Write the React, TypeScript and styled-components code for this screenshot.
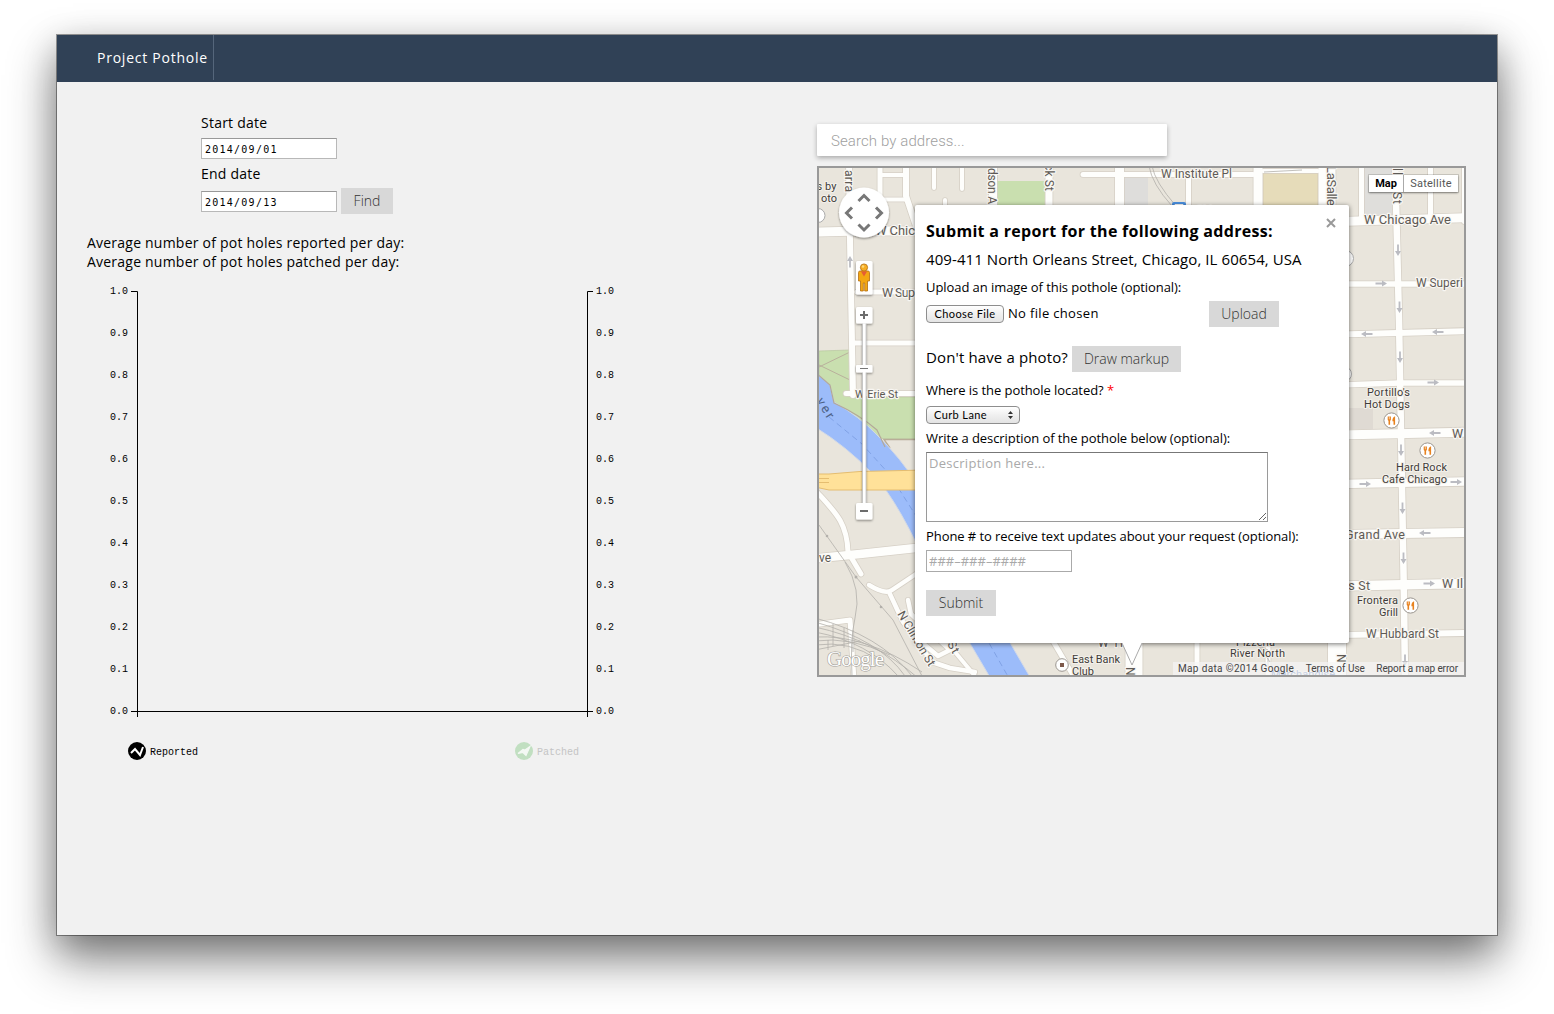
import React from 'react';
import styled, { createGlobalStyle } from 'styled-components';

const GlobalStyle = createGlobalStyle`
  * { box-sizing: border-box; }
  html, body { margin: 0; background: #fff; }
  body {
    width: 1554px;
    height: 1014px;
    overflow: hidden;
    font-family: 'Open Sans', 'Noto Sans', sans-serif;
    color: #000;
  }
`;

const Desktop = styled.div`
  width: 1554px;
  height: 1014px;
  padding: 35px 57px 79px;
`;

const Window = styled.div`
  height: 900px;
  display: flex;
  flex-direction: column;
  background: #f1f1f1;
  box-shadow: 0 0 0 1px rgba(0, 0, 0, 0.38), 0 24px 46px rgba(0, 0, 0, 0.46),
    0 10px 32px rgba(0, 0, 0, 0.22);
`;

const NavBar = styled.header`
  flex: none;
  height: 47px;
  padding-left: 40px;
  background: #304156;
`;

const Brand = styled.div`
  display: inline-block;
  height: 45px;
  padding-right: 5px;
  border-right: 1px solid #55667b;
  color: #fff;
  font-size: 14px;
  line-height: 46px;
  letter-spacing: 0.76px;
`;

const Columns = styled.main`
  display: grid;
  grid-template-columns: 730px 650px;
  padding-left: 30px;
`;

const StatsColumn = styled.section`
  padding-top: 31px;
`;

const DateForm = styled.form`
  margin-left: 114px;
`;

const DateLabel = styled.label<{ $gap: number }>`
  display: block;
  margin-bottom: ${(p) => p.$gap}px;
  font-size: 14px;
  line-height: 19px;
  letter-spacing: 0.23px;
`;

const DateRow = styled.div`
  display: flex;
  align-items: flex-end;
  gap: 4px;
  margin-bottom: 5px;
  &:last-child { height: 24px; margin: 0 0 2px; }
`;

const DateInput = styled.input`
  width: 136px;
  height: 21px;
  padding: 2px 3px 0;
  border: 1px solid #b8b8b8;
  border-top-color: #999;
  border-radius: 0;
  background: #fff;
  font: 10px 'DejaVu Sans Mono', 'Liberation Mono', monospace;
  letter-spacing: 1.25px;
  outline: none;
`;

const FlatButton = styled.button<{ $w: number }>`
  flex: none;
  width: ${(p) => p.$w}px;
  height: 26px;
  padding: 0;
  border: 0;
  background: #d8d8d8;
  color: #333;
  font-family: 'Open Sans', sans-serif;
  font-size: 14px;
  font-weight: 300;
  line-height: 26px;
`;

const FindButton = styled(FlatButton)`
  margin-bottom: -2px;
`;

const Averages = styled.div`
  margin-top: 21px;
  font-size: 14px;
  line-height: 19px;
  letter-spacing: 0.22px;
`;

const Chart = styled.svg`
  display: block;
  margin: 10px 0 0 13px;
  font: 10px 'Liberation Mono', monospace;
  letter-spacing: 0;
`;

const MapColumn = styled.section`
  padding-top: 42px;
`;

const SearchBox = styled.input`
  display: block;
  width: 350px;
  height: 32px;
  padding: 1px 14px 0;
  border: 0;
  border-radius: 1px;
  background: #fff;
  box-shadow: 0 2px 5px rgba(0, 0, 0, 0.3);
  font: 300 15px Roboto, sans-serif;
  letter-spacing: 0.1px;
  outline: none;
  &::placeholder { color: #a0a0a0; }
`;

const MapFrame = styled.div`
  position: relative;
  width: 649px;
  height: 511px;
  margin-top: 10px;
  border: 2px solid #999;
  overflow: hidden;
`;

const MapCanvas = styled.svg`
  display: block;
  font-family: Roboto, sans-serif;
`;

const MapTypes = styled.div`
  position: absolute;
  top: 7px;
  right: 6px;
  display: flex;
  background: #fff;
  box-shadow: 0 1px 2px rgba(0, 0, 0, 0.4), 0 0 0 1px rgba(0, 0, 0, 0.12);
`;

const MapType = styled.div<{ $active?: boolean; $w: number }>`
  width: ${(p) => p.$w}px;
  height: 17px;
  font: ${(p) => (p.$active ? 700 : 400)} 11px/18px Roboto, sans-serif;
  letter-spacing: ${(p) => (p.$active ? 0 : 0.25)}px;
  text-align: center;
  color: ${(p) => (p.$active ? '#000' : '#565656')};
  & + & { border-left: 1px solid #aaa; }
`;

const Attribution = styled.div`
  position: absolute;
  right: 0;
  bottom: 0;
  display: flex;
  justify-content: space-between;
  width: 291px;
  height: 13px;
  padding: 0 6px 0 5px;
  background: rgba(245, 245, 245, 0.7);
  color: #444;
  font: 10px/13px Roboto, sans-serif;
`;

const Credit = styled.span<{ $ls: number }>`
  letter-spacing: ${(p) => p.$ls}px;
  white-space: nowrap;
`;

const Popup = styled.div`
  position: absolute;
  left: 96px;
  top: 37px;
  width: 434px;
  height: 438px;
  padding: 14px 11px 0;
  border-radius: 2px;
  background: #fff;
  box-shadow: 0 1px 5px rgba(0, 0, 0, 0.55);
  display: flex;
  flex-direction: column;
  align-items: flex-start;
`;

const CloseIcon = styled.svg`
  position: absolute;
  top: 13px;
  right: 13px;
`;

const Title = styled.h1`
  margin: 0;
  font-size: 16px;
  font-weight: 700;
  line-height: 24px;
  letter-spacing: 0.31px;
  white-space: nowrap;
`;

const Address = styled.div`
  margin-top: 6px;
  font-size: 15px;
  line-height: 21px;
  letter-spacing: 0.08px;
  white-space: nowrap;
`;

const FieldLabel = styled.label<{ $mt: number }>`
  margin-top: ${(p) => p.$mt}px;
  font-size: 13px;
  line-height: 18px;
  letter-spacing: -0.07px;
  white-space: nowrap;
`;

const Required = styled.span`
  color: #f00;
`;

const UploadRow = styled.div`
  display: flex;
  align-items: center;
  width: 353px;
  height: 26px;
  margin-top: 5px;
`;

const NativeButton = styled.button`
  width: 78px;
  height: 18px;
  padding: 0;
  border: 1px solid #8e8e8e;
  border-radius: 4px;
  background: linear-gradient(#fff, #f0f0f0 50%, #e4e4e4);
  font: 11px/16px 'Lato', sans-serif;
  letter-spacing: 0.4px;
  color: #000;
`;

const FileName = styled.span`
  margin: 0 auto 2px 4px;
  font-size: 13px;
  letter-spacing: 0.33px;
`;

const MarkupRow = styled.div`
  display: flex;
  align-items: center;
  gap: 4px;
  height: 26px;
  margin-top: 19px;
`;

const Prompt = styled.span`
  font-size: 15px;
  line-height: 22px;
  margin-top: -4px;
  letter-spacing: 0.13px;
  white-space: nowrap;
`;

const LaneSelect = styled.div`
  display: flex;
  align-items: center;
  justify-content: space-between;
  width: 94px;
  height: 18px;
  margin-top: 7px;
  padding: 0 5px 0 7px;
  border: 1px solid #8e8e8e;
  border-radius: 4px;
  background: linear-gradient(#fff, #f0f0f0 50%, #e4e4e4);
  font: 11px/16px 'Lato', sans-serif;
  letter-spacing: 0.4px;
`;

const Description = styled.textarea`
  width: 342px;
  height: 70px;
  margin-top: 5px;
  padding: 1px 2px;
  border: 1px solid #9a9a9a;
  border-top-color: #777;
  background: #fff;
  font: 13px/18px 'Open Sans', sans-serif;
  letter-spacing: 0.28px;
  outline: none;
  &::placeholder { color: #a9a9a9; }
`;

const PhoneInput = styled.input`
  width: 146px;
  height: 22px;
  margin-top: 5px;
  padding: 0 2px;
  border: 1px solid #aaa;
  background: #fff;
  font: 13px 'Open Sans', sans-serif;
  letter-spacing: 0;
  outline: none;
  &::placeholder { color: #a9a9a9; }
`;

const SubmitSlot = styled.div`
  display: flex;
  margin-top: 18px;
`;

const PopupTail = styled.svg`
  position: absolute;
  left: 302px;
  top: 475px;
`;

const TICKS = ['1.0', '0.9', '0.8', '0.7', '0.6', '0.5', '0.4', '0.3', '0.2', '0.1', '0.0'];

function PotholeChart() {
  return (
    <Chart width="530" height="490" viewBox="100 281 530 490">
      <path d="M131 291.5H137.5V717M593 291.5H587.5V717M131 711.5H593" fill="none" stroke="#000" />
      {TICKS.map((t, i) => (
        <g key={t}>
          <text x="110" y={294 + i * 42}>{t}</text>
          <text x="596" y={294 + i * 42}>{t}</text>
        </g>
      ))}
      <circle cx="137" cy="751" r="9" fill="#000" />
      <path d="M131 753l4-4 5 6 3-8" fill="none" stroke="#fff" strokeWidth="2" />
      <text x="150" y="755">Reported</text>
      <circle cx="524" cy="751" r="9" fill="#c1dfc1" />
      <path d="M518 753.5l5-4 2 .5 5-3.500-4 9-3-3z" fill="#f4f8f4" stroke="#f4f8f4" strokeWidth="1.2" />
      <text x="537" y="755" fill="#c4c4c4">Patched</text>
    </Chart>
  );
}

/* Road centre lines: path and width. */
const ROADS: [string, number][] = [
  ['M849 160L850 240L853 395', 6],
  ['M819 232L860 231L925 231', 9],
  ['M857 292H920', 5],
  ['M855 343H920', 5],
  ['M846 393.5H920', 5],
  ['M880 160V205', 5],
  ['M906 160V196L916 226', 6],
  ['M880 175H906M880 199.5H906', 4],
  ['M934 160V188M962 160V189M945 200V210', 4],
  ['M993 160V210', 8],
  ['M1049 160V210', 7],
  ['M1083 174.5H1253', 5],
  ['M1119.5 160V210', 9],
  ['M1188.5 177V210', 5],
  ['M1258 160V210', 9],
  ['M1263 171H1318', 4],
  ['M1327 160V210', 17],
  ['M1361.5 160V220', 5],
  ['M1395 160L1399 320L1404 600L1405 680', 6.5],
  ['M1430.5 160V218', 5],
  ['M1464 160V222', 4],
  ['M1340 221.5L1470 217.5', 9],
  ['M1340 284H1470', 5.5],
  ['M1340 334.5L1470 331', 6],
  ['M1340 385L1400 383L1470 383', 5.5],
  ['M1340 435L1470 432', 9],
  ['M1340 484L1470 481.5', 8.5],
  ['M1340 534.5L1470 532.5', 9],
  ['M1340 586L1470 583.5', 9.5],
  ['M1340 635L1470 633', 6],
  ['M815 558.5L860 554L925 547', 8.5],
  ['M815 490C835 512 847 522 848 552L861 574', 5],
  ['M869 585C882 593 888 593 892 590L925 568', 4.5],
  ['M889 592L903 622L932 662L950 668L975 672', 4.5],
  ['M908 600L911 614L950 650L938 656L925 645', 4.5],
  ['M820 624L850 620L854 680', 5],
  ['M1050 636L1077 682', 5],
  ['M1134 640V680', 17],
  ['M1197 640V680', 5],
  ['M1268 640V680', 5],
  ['M1337 640V680', 18],
  ['M945 640L975 676', 4],
];

/* One-way markers: x, y, rotation. */
const ARROWS: [number, number, number][] = [
  [1381, 283.5, 0], [1367, 334, 180], [1438, 332, 180],
  [1433, 382.5, 0], [1435, 433, 180], [1365, 484, 0], [1456, 482, 0],
  [1425, 533, 180], [1429, 583.5, 0],
  [1398, 250, 90], [1399.5, 307, 90], [1400, 357, 90], [1401, 450, 90],
  [1402.5, 508, 90], [1403.5, 558, 90], [1405, 660, 90], [850, 262, -90],
];

/* Street and place names: text, x, y, font size, drawn width, rotation. */
const LABELS: [string, number, number, number, number, number][] = [
  ['W Institute Pl', 1161, 177.5, 12, 71, 0],
  ['W Chic', 875, 235, 13, 40, 0],
  ['W Sup', 882, 296.5, 12.5, 33, 0],
  ['W Erie St', 855, 397.5, 11, 43, 0],
  ['W Chicago Ave', 1364, 223.5, 13, 87, 0],
  ['W Superi', 1416, 287, 12, 47, 0],
  ['W Hubbard St', 1366, 638, 12, 73, 0],
  ['Grand Ave', 1345, 538.5, 12.5, 60, 0],
  ['is St', 1345, 589.5, 12.5, 25, 0],
  ['W Il', 1442, 587.5, 12.5, 21, 0],
  ['W', 1452, 437.5, 12.5, 12, 0],
  ['ve', 819, 562, 12, 12, 0],
  ['arra', 845, 170, 12, 22, 90],
  ['dson A', 988, 168, 12, 36, 90],
  ['ck St', 1045, 164, 12, 27, 90],
  ['LaSalle', 1327, 166, 13, 40, 90],
  ['St', 1393, 192, 12, 12, 90],
  ['ll', 1393, 168, 12, 7, 90],
  ['N Clinton St', 897, 614, 12, 62, 59],
  ['St', 947, 644, 12, 12, 60],
  ['W H', 1098, 647, 12, 25, 0],
  ['N', 1126, 667, 12, 8, 90],
  ['N', 1337, 654, 12, 8, 90],
];

const PLACES: [string, number, number, number][] = [
  ["Portillo's", 1367, 396, 43],
  ['Hot Dogs', 1364, 408, 46],
  ['Hard Rock', 1396, 471, 51],
  ['Cafe Chicago', 1382, 483, 65],
  ['Frontera', 1357, 604, 41],
  ['Grill', 1379, 616, 19],
  ['East Bank', 1072, 663, 48],
  ['Club', 1072, 675, 22],
  ['Pizzeria', 1236, 646, 39],
  ['River North', 1230, 657, 55],
  ['s by', 816.5, 190, 20],
  ['oto', 821, 202, 16],
];

function Restaurant({ x, y }: { x: number; y: number }) {
  return (
    <g transform={`translate(${x} ${y})`}>
      <circle r="7.6" fill="#fff" stroke="#9b9690" strokeWidth="1" />
      <path d="M-3.800-4H-.6V-1Q-.6 0-1.400 .3V4.200H-3V.3Q-3.800 0-3.800-1Z" fill="#e8821e" />
      <path d="M-2.200-4V-1.200" stroke="#fff" strokeWidth=".6" />
      <path d="M3.600-4.300V4.300H2V.8H.9Q.7-3.400 3.600-4.300z" fill="#e8821e" />
    </g>
  );
}

function CityMap() {
  return (
    <MapCanvas width="645" height="507" viewBox="819 168 645 507">
      <rect x="819" y="168" width="646" height="507" fill="#e9e5dc" />
      <rect x="997" y="181" width="49" height="30" fill="#c9dfaf" />
      <rect x="1124" y="177" width="24" height="30" fill="#dedddb" />
      <rect x="1263" y="173" width="55" height="35" fill="#e6dcba" stroke="#d5c9a4" strokeWidth=".7" />
      <rect x="1364" y="168" width="28" height="47" fill="#dfdedb" />
      <rect x="1345" y="408" width="28" height="21" fill="#dfdad3" />
      <path d="M819 351L850 350L850 397H920V439H884L860 430L819 385Z" fill="#c9dfaf" stroke="#b9c7a0" strokeWidth=".7" />
      <path d="M819 367L850 352M819 365L850 380" stroke="#b9b09c" strokeWidth="1" fill="none" />
      <path d="M920 439.500H884L890 448" stroke="#b9ad98" strokeWidth="1.4" fill="none" />
      <path
        d="M815 372L830 385L834 402Q860 417 877 435Q900 457 920 488L1034 684H994L935 584Q900 502 872 473Q846 446 815 427Z"
        fill="#9cbcfa"
        stroke="#d0d8e8"
        strokeWidth="1"
      />
      <path d="M815 372L830 385L834 403Q860 415 877 430L885 447" fill="none" stroke="#b3a898" strokeWidth="1.2" />
      <path d="M829 417L862 444L890 475L925 530L1010 680" fill="none" stroke="#789be0" strokeWidth=".8" strokeDasharray="6 4" />
      <path d="M815 474H829L860 471.500L925 470V490H829L815 487Z" fill="#ffe199" stroke="#e5bd70" />
      <path d="M815 478.500H829M815 482.500H829" stroke="#e5bd70" />

      {ROADS.map(([d, w], i) => (
        <path key={`e${i}`} d={d} fill="none" stroke="#d6d0c6" strokeWidth={w + 1.6} strokeLinecap="round" strokeLinejoin="round" />
      ))}
      {ROADS.map(([d, w], i) => (
        <path key={`r${i}`} d={d} fill="none" stroke="#fefefc" strokeWidth={w} strokeLinecap="round" strokeLinejoin="round" />
      ))}

      <g fill="none" stroke="#b3b0ab" strokeWidth=".8">
        <path d="M819 525L856 577L893 620L922 676" />
        <path d="M845 562Q862 590 855 618Q850 640 852 676" />
        <path d="M815 618Q880 635 912 676M815 622Q880 640 905 676M815 627Q875 640 918 678M815 632Q868 642 898 676" />
        <path d="M815 637Q865 634 922 672M815 641Q850 636 890 655M815 645Q850 640 878 660M815 650L860 641" />
        <path d="M833 624V646M844 628V648M853 630V652M828 640V650" />
        <path d="M1149 166Q1152 184 1172 206M1152 166Q1155 182 1176 206" />
        <path d="M1264 172L1302 170M1245 640L1268 650V668M1255 640L1270 662" />
      </g>
      <g fill="#b3b0ab">
        <circle cx="827" cy="536" r="1.3" />
        <circle cx="856" cy="577" r="1.5" />
        <circle cx="881" cy="607" r="1.3" />
      </g>

      {ARROWS.map(([x, y, r], i) => (
        <path
          key={i}
          transform={`translate(${x} ${y}) rotate(${r})`}
          d="M-5.500-.9H1V-3L6 0L1 3V.9H-5.500Z"
          fill="#bbbcc2"
        />
      ))}

      <rect x="1172" y="202" width="14" height="12" rx="2" fill="#4a8fdf" />
      <path d="M1175 208V204.500H1183V208" fill="none" stroke="#fff" />
      <circle cx="818" cy="215.500" r="7" fill="#fff" stroke="#aaa" />
      <circle cx="1345.500" cy="258.500" r="8" fill="#fff" stroke="#aaa" />
      <circle cx="1344" cy="374" r="7.500" fill="#fff" stroke="#aaa" />
      <circle cx="1062" cy="665" r="6.300" fill="#fff" stroke="#9b9690" />
      <rect x="1060" y="663" width="4" height="4" fill="#7d5a4c" />

      <text transform="translate(816 401) rotate(58)" fontSize="13" textLength="22" fill="#4d6186">ver</text>
      <g stroke="#f8f6f2" strokeWidth="2.4" strokeLinejoin="round" style={{ paintOrder: 'stroke' }} fill="#5e5a55">
        {LABELS.map(([t, x, y, size, w, r]) => (
          <text key={`${t}${x}`} transform={`translate(${x} ${y}) rotate(${r})`} fontSize={size} textLength={w}>
            {t}
          </text>
        ))}
      </g>
      <g stroke="#f3f0ea" strokeWidth="2.2" strokeLinejoin="round" style={{ paintOrder: 'stroke' }} fill="#3f3c39" fontSize="11">
        {PLACES.map(([t, x, y, w]) => (
          <text key={`${t}${x}`} x={x} y={y} textLength={w}>
            {t}
          </text>
        ))}
        <text x="1271" y="678" fill="#4f73b8" textLength="64">Merchandise</text>
        <text x="1196" y="213">Chicago</text>
      </g>

      <Restaurant x={1391.5} y={420.5} />
      <Restaurant x={1427.5} y={450.5} />
      <Restaurant x={1410.5} y={605.5} />

      <text
        x="827"
        y="666"
        fontSize="21"
        textLength="57"
        fill="#fff"
        stroke="#a5a29b"
        strokeWidth="1.2"
        style={{ paintOrder: 'stroke', fontFamily: "'Liberation Serif', serif" }}
      >
        Google
      </text>

      <MapControls />
    </MapCanvas>
  );
}

function MapControls() {
  return (
    <g>
      <defs>
        <filter id="lift" x="-30%" y="-30%" width="160%" height="170%">
          <feDropShadow dx="0" dy="1.200" stdDeviation="1.200" floodOpacity="0.45" />
        </filter>
      </defs>
      <g filter="url(#lift)">
        <circle cx="864" cy="212.500" r="25" fill="#fff" />
        <rect x="856" y="261" width="16.500" height="33.500" rx="1.500" fill="#fff" />
        <rect x="862.500" y="323" width="3.500" height="182" fill="#fff" stroke="#bbb" strokeWidth=".7" />
        <rect x="856" y="307" width="16.500" height="16.500" rx="1.500" fill="#fff" />
        <rect x="856" y="365" width="16.500" height="7.500" rx="1" fill="#fff" />
        <rect x="856" y="503" width="16.500" height="16.500" rx="1.500" fill="#fff" />
      </g>
      <g fill="none" stroke="#777" strokeWidth="3">
        <path d="M858.500 201L864 195.500L869.500 201" />
        <path d="M858.500 224.500L864 230L869.500 224.500" />
        <path d="M852 207.500L846.500 213L852 218.500" />
        <path d="M876 207.500L881.500 213L876 218.500" />
      </g>
      <path d="M860 315H868M864 311V319M860 511H868" stroke="#6c6c6c" strokeWidth="2" />
      <path d="M860 368.500H868" stroke="#777" strokeWidth="1" />
      <g stroke="#b36d10" strokeWidth=".8">
        <path d="M858.500 272.500Q858.500 271 860 271H868Q869.500 271 869.500 272.500V281H867.500V291H864.700V283H863.300V291H860.500V281H858.500Z" fill="#f3a712" />
        <circle cx="864" cy="267.500" r="3.600" fill="#f6ad22" />
      </g>
      <path d="M861 271.500H867L864 276.500Z" fill="#e65d35" />
      <circle cx="863" cy="266.500" r="1.300" fill="#ffd777" />
    </g>
  );
}

function ReportPopup() {
  return (
    <>
      <Popup>
        <CloseIcon width="10" height="10" viewBox="0 0 10 10">
          <path d="M1 1L9 9M9 1L1 9" stroke="#999" strokeWidth="2" />
        </CloseIcon>
        <Title>Submit a report for the following address:</Title>
        <Address>409-411 North Orleans Street, Chicago, IL 60654, USA</Address>
        <FieldLabel $mt={8}>Upload an image of this pothole (optional):</FieldLabel>
        <UploadRow>
          <NativeButton>Choose File</NativeButton>
          <FileName>No file chosen</FileName>
          <FlatButton $w={70}>Upload</FlatButton>
        </UploadRow>
        <MarkupRow>
          <Prompt>Don't have a photo?</Prompt>
          <FlatButton $w={109}>Draw markup</FlatButton>
        </MarkupRow>
        <FieldLabel $mt={9}>
          Where is the pothole located? <Required>*</Required>
        </FieldLabel>
        <LaneSelect>
          Curb Lane
          <svg width="7" height="8" viewBox="0 0 7 8">
            <path d="M1 3L3.500 0L6 3ZM1 5L3.500 8L6 5Z" fill="#333" />
          </svg>
        </LaneSelect>
        <FieldLabel $mt={5}>Write a description of the pothole below (optional):</FieldLabel>
        <Description placeholder="Description here..." />
        <FieldLabel $mt={5}>Phone # to receive text updates about your request (optional):</FieldLabel>
        <PhoneInput placeholder="###–###–####" />
        <SubmitSlot>
          <FlatButton $w={70}>Submit</FlatButton>
        </SubmitSlot>
      </Popup>
      <PopupTail width="22" height="24" viewBox="0 0 22 24">
        <path d="M1 0L11 22L21 0" fill="#fff" stroke="#aaa" strokeWidth="1" />
      </PopupTail>
    </>
  );
}

export default function App() {
  return (
    <>
      <GlobalStyle />
      <Desktop>
        <Window>
          <NavBar>
            <Brand>Project Pothole</Brand>
          </NavBar>
          <Columns>
            <StatsColumn>
              <DateForm>
                <DateLabel $gap={6}>Start date</DateLabel>
                <DateRow>
                  <DateInput defaultValue="2014/09/01" />
                </DateRow>
                <DateLabel $gap={5}>End date</DateLabel>
                <DateRow>
                  <DateInput defaultValue="2014/09/13" />
                  <FindButton $w={52} type="button">Find</FindButton>
                </DateRow>
              </DateForm>
              <Averages>
                Average number of pot holes reported per day:
                <br />
                Average number of pot holes patched per day:
              </Averages>
              <PotholeChart />
            </StatsColumn>
            <MapColumn>
              <SearchBox placeholder="Search by address..." />
              <MapFrame>
                <CityMap />
                <MapTypes>
                  <MapType $active $w={34}>Map</MapType>
                  <MapType $w={55}>Satellite</MapType>
                </MapTypes>
                <Attribution>
                  <Credit $ls={0.35}>Map data ©2014 Google</Credit>
                  <Credit $ls={0}>Terms of Use</Credit>
                  <Credit $ls={-0.1}>Report a map error</Credit>
                </Attribution>
                <ReportPopup />
              </MapFrame>
            </MapColumn>
          </Columns>
        </Window>
      </Desktop>
    </>
  );
}
